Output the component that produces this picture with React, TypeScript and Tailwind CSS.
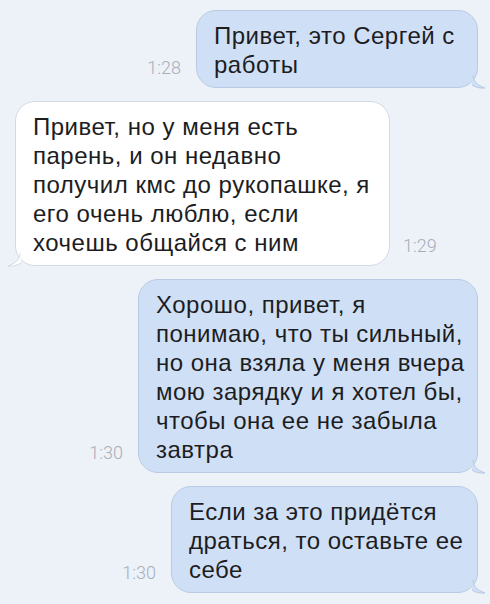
import React from "react";

const OUT_BG = "#cfe0f6";
const OUT_BORDER = "#b9cbe2";
const IN_BORDER = "#d3dae4";

function TailRight() {
  return (
    <svg
      className="absolute right-[-10px] bottom-[-2px]"
      width="16"
      height="20"
      viewBox="0 0 16 20"
    >
      <path
        d="M2 0 L2 6 C2 12 6 16 14 19 C9 19.5 5 18.5 1 16 Z"
        fill={OUT_BG}
      />
      <path
        d="M2 6 C2 12 6 16 14 19 C9 19.5 5 18.5 1 16"
        fill="none"
        stroke={OUT_BORDER}
        strokeWidth="1"
      />
    </svg>
  );
}

function TailLeft() {
  return (
    <svg
      className="absolute left-[-10px] bottom-[-2px]"
      width="16"
      height="20"
      viewBox="0 0 16 20"
    >
      <path
        d="M14 0 L14 6 C14 12 10 16 2 19 C7 19.5 11 18.5 15 16 Z"
        fill="#ffffff"
      />
      <path
        d="M14 6 C14 12 10 16 2 19 C7 19.5 11 18.5 15 16"
        fill="none"
        stroke={IN_BORDER}
        strokeWidth="1"
      />
    </svg>
  );
}

function Time({ t }: { t: string }) {
  return (
    <span className="font-['Roboto',sans-serif] font-light text-[18px] leading-none text-[#a7aeb8] mb-[11px]">
      {t}
    </span>
  );
}

const TEXT =
  "font-['Liberation_Sans','Arial',sans-serif] text-[24px] leading-[29px] tracking-[0.5px] text-[#1d1d1f] whitespace-nowrap";

function Out({ time, width, lines }: { time: string; width: string; lines: string[] }) {
  return (
    <div className="flex justify-end items-end pr-[12px] gap-[15px]">
      <Time t={time} />
      <div
        className={`relative rounded-[20px] border border-[#b9cbe2] bg-[#cfe0f6] pl-[17px] pr-[8px] pt-[10px] pb-[8px] ${width}`}
      >
        <div className={TEXT}>
          {lines.map((l, i) => (
            <div key={i}>{l}</div>
          ))}
        </div>
        <TailRight />
      </div>
    </div>
  );
}

export default function App() {
  return (
    <div className="w-[490px] h-[604px] overflow-hidden bg-[#edf2f9] pt-[10px] flex flex-col gap-[13px]">
      <Out time="1:28" width="w-[282px]" lines={["Привет, это Сергей с", "работы"]} />

      <div className="flex items-end pl-[15px] gap-[13px]">
        <div className="relative w-[375px] rounded-[20px] border border-[#d3dae4] bg-white pl-[17px] pr-[8px] pt-[10px] pb-[8px]">
          <div className={TEXT}>
            <div>Привет, но у меня есть</div>
            <div>парень, и он недавно</div>
            <div>получил кмс до рукопашке, я</div>
            <div>его очень люблю, если</div>
            <div>хочешь общайся с ним</div>
          </div>
          <TailLeft />
        </div>
        <Time t="1:29" />
      </div>

      <Out
        time="1:30"
        width="w-[340px]"
        lines={[
          "Хорошо, привет, я",
          "понимаю, что ты сильный,",
          "но она взяла у меня вчера",
          "мою зарядку и я хотел бы,",
          "чтобы она ее не забыла",
          "завтра",
        ]}
      />

      <Out
        time="1:30"
        width="w-[307px]"
        lines={["Если за это придётся", "драться, то оставьте ее", "себе"]}
      />
    </div>
  );
}
